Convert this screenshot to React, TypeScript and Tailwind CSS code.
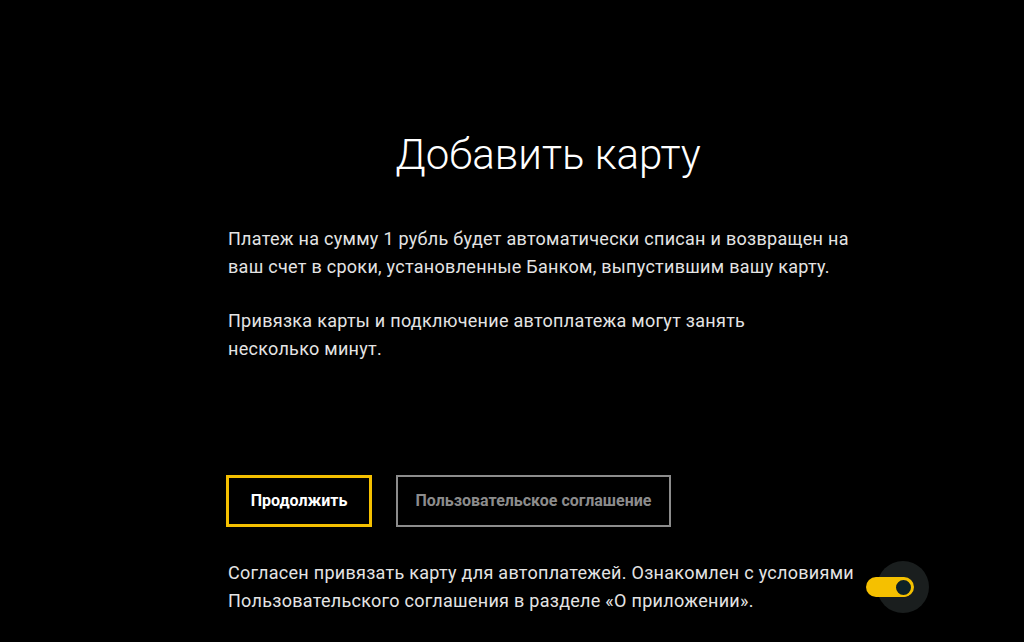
export default function App() {
  return (
    <div
      className="w-[1024px] h-[642px] bg-black overflow-hidden pl-[228px] pt-[127px]"
      style={{ fontFamily: "Roboto, 'Noto Sans', sans-serif" }}
    >
      <div className="w-[640px] flex flex-col">
        <h1 className="text-center text-white text-[42px] leading-[56px] font-light">
          Добавить карту
        </h1>

        <div className="mt-[42px] flex flex-col gap-[26px] text-[18px] leading-[28px] tracking-[0.28px] text-[#e4e4e4]">
          <p className="whitespace-nowrap">
            Платеж на сумму 1 рубль будет автоматически списан и возвращен на
            <br />
            ваш счет в сроки, установленные Банком, выпустившим вашу карту.
          </p>
          <p className="whitespace-nowrap">
            Привязка карты и подключение автоплатежа могут занять
            <br />
            несколько минут.
          </p>
        </div>

        <div className="mt-[112px] flex gap-[24px] -ml-[2px]">
          <button className="w-[146px] h-[52px] border-[3px] border-[#f5c000] text-white text-[16px] font-bold">
            Продолжить
          </button>
          <button className="w-[275px] h-[52px] border-2 border-[#8c8c8c] text-[#8c8c8c] text-[16px] font-bold">
            Пользовательское соглашение
          </button>
        </div>

        <div className="mt-[32px] w-[701px] flex items-center justify-between">
          <p className="whitespace-nowrap text-[18px] leading-[28px] tracking-[0.28px] text-[#e4e4e4]">
            Согласен привязать карту для автоплатежей. Ознакомлен с условиями
            <br />
            Пользовательского соглашения в разделе «О приложении».
          </p>
          <div className="w-[52px] h-[52px] rounded-full bg-[#1a1e1e] flex items-center justify-center">
            <div className="w-[48px] h-[20px] rounded-full bg-[#f5c000] flex items-center justify-end pr-[1px] -ml-[26px]">
              <div className="w-[19px] h-[19px] rounded-full bg-[#0e2126] border-2 border-[#f5c000]" />
            </div>
          </div>
        </div>
      </div>
    </div>
  );
}
